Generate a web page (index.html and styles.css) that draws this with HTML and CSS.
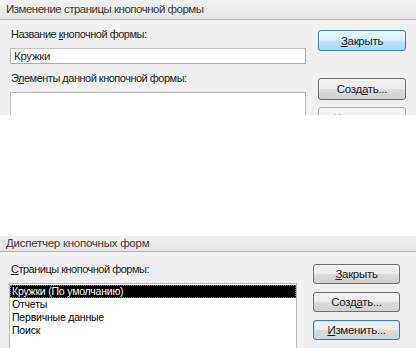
FILE: index.html
```html
<!DOCTYPE html>
<html>
<head>
<title>Кнопочные формы</title>
<link rel="stylesheet" href="styles.css">
</head>
<body>
<div class="win win-edit">
  <div class="title">Изменение страницы кнопочной формы</div>
  <div class="body">
    <div class="main">
      <div class="label">Название <u>к</u>нопочной формы:</div>
      <div class="textbox">Кружки</div>
      <div class="label">Э<span class="ul">л</span>ементы данной кнопочной формы:</div>
      <div class="listbox"></div>
    </div>
    <div class="side">
      <button class="btn default"><u>З</u>акрыть</button>
      <button class="btn create">Созд<u>а</u>ть...</button>
      <button class="btn" disabled>Изменить...</button>
    </div>
  </div>
</div>

<div class="win win-switch">
  <div class="title">Диспетчер кнопочных форм</div>
  <div class="body">
    <div class="main">
      <div class="label"><u>С</u>траницы кнопочной формы:</div>
      <div class="listbox pages">
        <div class="item selected">Кружки (По умолчанию)</div>
        <div class="item">Отчеты</div>
        <div class="item">Первичные данные</div>
        <div class="item">Поиск</div>
      </div>
    </div>
    <div class="side">
      <button class="btn"><u>З</u>акрыть</button>
      <button class="btn">Созд<u>а</u>ть...</button>
      <button class="btn focus"><u>И</u>зменить...</button>
    </div>
  </div>
</div>
</body>
</html>
```

FILE: styles.css
```css
body {
  margin: 0;
  background-color: #fff;
  font-family: "Liberation Sans", Arial, sans-serif;
  font-size: 11px;
  letter-spacing: -0.5px;
  color: #1e1e1e;
}

.win {
  overflow: hidden;
  background-color: #f0f0f0;
}

.win-edit {
  height: 115px;
}

.win-switch {
  margin-top: 121px;
  height: 112px;
}

.title {
  height: 19px;
  line-height: 19px;
  padding-left: 6px;
  font-size: 11.5px;
  color: #3a3a3a;
  background: linear-gradient(#f2f2f2, #e4e4e4);
  border-bottom: 1px solid #b4b4b4;
}

.win-switch .title {
  height: 15px;
  line-height: 15px;
  letter-spacing: -0.25px;
}

.body {
  display: flex;
}

.main {
  width: 296px;
  padding-left: 10px;
}

.label {
  padding-left: 1px;
  line-height: 16px;
}

.win-edit .label {
  margin-top: 6px;
}

.win-edit .label + .listbox {
  margin-top: 6px;
}

.ul {
  text-decoration: underline;
}

.textbox {
  margin-top: 6px;
  height: 14px;
  line-height: 14px;
  padding-left: 3px;
  font-size: 11.5px;
  letter-spacing: -0.3px;
  background-color: #fff;
  border: 1px solid #abadb3;
  border-top-color: #c6c6c6;
}

.listbox {
  height: 60px;
  background-color: #fff;
  border: 1px solid #b8b8b8;
}

.side {
  display: flex;
  flex-direction: column;
  padding-left: 12px;
}

.btn {
  width: 88px;
  height: 22px;
  padding: 0;
  font-family: inherit;
  font-size: 11.5px;
  letter-spacing: -0.3px;
  color: #1e1e1e;
  border: 1px solid #707070;
  border-radius: 3px;
  background: linear-gradient(#f2f2f2 0%, #ebebeb 48%, #dddddd 52%, #cfcfcf 100%);
}

.btn u {
  text-decoration: underline;
}

.win-edit .btn {
  margin-bottom: 7px;
}

.win-edit .btn.default {
  margin-top: 10px;
  height: 21px;
  border-color: #3c7fb1;
  background: linear-gradient(#eaf6fd 0%, #d9f0fc 48%, #bee6fd 52%, #a7d9f5 100%);
}

.win-edit .btn.create {
  margin-top: 20px;
}

.btn:disabled {
  color: #9a9a9a;
  border-color: #adb2b5;
  background: #f4f4f4;
}

/* second dialog */
.win-switch .main {
  width: 288px;
  padding-left: 9px;
}

.win-switch .label {
  margin-top: 9px;
  padding-left: 2px;
}

.pages {
  margin-top: 6px;
  height: 70px;
  padding-top: 1px;
  font-size: 10.5px;
  letter-spacing: -0.2px;
  color: #000;
}

.item {
  height: 13px;
  line-height: 13px;
  padding-left: 2px;
}

.item.selected {
  background-color: #000;
  color: #fff;
  outline: 1px dotted #777;
  outline-offset: -1px;
}

.win-switch .side {
  padding-left: 16px;
  padding-top: 12px;
  gap: 8px;
}

.win-switch .btn {
  width: 87px;
  height: 20px;
}

.btn.focus {
  border-color: #3c7fb1;
  box-shadow: inset 0 0 0 1px #b9e3f9;
  background: linear-gradient(#f2f2f2 0%, #ebebeb 48%, #dddddd 52%, #cfcfcf 100%);
}
```
